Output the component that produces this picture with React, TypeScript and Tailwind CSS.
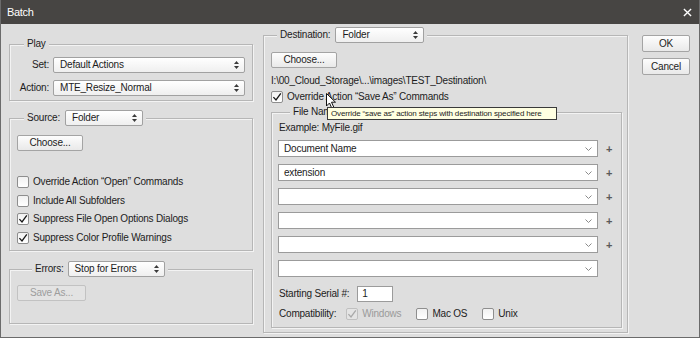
import type { ReactNode } from "react";

function UpDown() {
  return (
    <svg viewBox="0 0 5 8" className="h-[8px] w-[5px] shrink-0" fill="#3a3a3a">
      <path d="M2.5 0 5 3H0Z" />
      <path d="M0 5h5L2.5 8Z" />
    </svg>
  );
}

function Select({ children, className = "" }: { children: ReactNode; className?: string }) {
  return (
    <div
      className={`flex h-[16px] items-center justify-between rounded-[2px] border border-[#a1a1a1] bg-linear-to-b from-white to-[#efefef] pl-[6px] pr-[5px] ${className}`}
    >
      <span>{children}</span>
      <UpDown />
    </div>
  );
}

function Button({ children, className = "", disabled }: { children: ReactNode; className?: string; disabled?: boolean }) {
  return (
    <button
      disabled={disabled}
      className={`flex h-[16px] items-center justify-center rounded-[2px] border ${
        disabled
          ? "border-[#c2c2c2] bg-[#e3e3e3] text-[#9d9d9d]"
          : "border-[#a4a4a4] bg-linear-to-b from-[#fdfdfd] to-[#e9e9e9] text-[#1c1c1c]"
      } ${className}`}
    >
      {children}
    </button>
  );
}

function Box({ checked, disabled }: { checked?: boolean; disabled?: boolean }) {
  return (
    <span
      className={`flex h-[12px] w-[12px] shrink-0 items-center justify-center rounded-[2px] border ${
        disabled ? "border-[#c0c0c0] bg-[#e4e4e4]" : "border-[#8e8e8e] bg-linear-to-b from-[#f1f1f1] to-white"
      }`}
    >
      {checked && (
        <svg viewBox="0 0 10 10" className="h-[10px] w-[10px]">
          <path d="M1.4 5.1 4 7.9 8.8 1.4" fill="none" stroke={disabled ? "#a9a9a9" : "#161616"} strokeWidth="1.3" />
        </svg>
      )}
    </span>
  );
}

function Check({ label, checked, disabled }: { label: string; checked?: boolean; disabled?: boolean }) {
  return (
    <div className="flex h-[18.5px] items-center gap-[4px]">
      <Box checked={checked} disabled={disabled} />
      <span className={disabled ? "text-[#9a9a9a]" : ""}>{label}</span>
    </div>
  );
}

function Combo({ value = "", plus }: { value?: string; plus?: boolean }) {
  return (
    <div className="flex items-center">
      <div className="flex h-[17px] w-[320px] items-center justify-between border border-[#9b9b9b] bg-white pl-[5px] pr-[5px]">
        <span>{value}</span>
        <svg viewBox="0 0 7 4" className="h-[4px] w-[7px]">
          <path d="M.5.5 3.5 3.5 6.5.5" fill="none" stroke="#8a8a8a" />
        </svg>
      </div>
      {plus && <span className="ml-[8px] text-[11px] font-bold text-[#5a5a5a]">+</span>}
    </div>
  );
}

const group = "border border-[#b6b6b6] shadow-[inset_1px_1px_0_#f3f3f3,1px_1px_0_#f3f3f3]";

export default function App() {
  return (
    <div className="relative flex h-[338px] w-[700px] flex-col overflow-hidden border-x border-b border-[#6b6b6b] bg-[#dedede] font-['Liberation_Sans',Arial,sans-serif] text-[10px] leading-[14px] tracking-[-0.2px] text-[#1c1c1c]">
      {/* title bar */}
      <div className="flex h-[24px] shrink-0 items-center justify-between bg-[#474543] pl-[6px] pr-[7px] text-[11px] tracking-[-0.3px] text-white">
        <span>Batch</span>
        <svg viewBox="0 0 10 10" className="h-[9px] w-[9px]">
          <path d="M1 1 9 9M9 1 1 9" stroke="#fff" strokeWidth="1.5" />
        </svg>
      </div>

      <div className="flex items-start">
        {/* left column */}
        <div className="ml-[8px] flex w-[244px] flex-col">
          <fieldset className={`mt-[13px] pb-[4px] ${group}`}>
            <legend className="ml-[14px] bg-[#dedede] px-[3px]">Play</legend>
            <div className="mt-[6px] flex items-center">
              <span className="w-[39px] text-right">Set:</span>
              <Select className="ml-[4px] w-[192px]">Default Actions</Select>
            </div>
            <div className="mt-[7px] flex items-center">
              <span className="w-[39px] text-right">Action:</span>
              <Select className="ml-[4px] w-[192px]">MTE_Resize_Normal</Select>
            </div>
          </fieldset>

          <fieldset className={`mt-[9px] pb-[3px] ${group}`}>
            <legend className="ml-[14px] bg-[#dedede] px-[3px]">
              <div className="flex items-center gap-[5px]">
                <span>Source:</span>
                <Select className="w-[78px]">Folder</Select>
              </div>
            </legend>
            <div className="mt-[9px] pl-[7px]">
              <Button className="w-[66px]">Choose...</Button>
            </div>
            <div className="mt-[22px] flex flex-col pl-[7px]">
              <Check label={"Override Action \u201cOpen\u201d Commands"} />
              <Check label="Include All Subfolders" />
              <Check label="Suppress File Open Options Dialogs" checked />
              <Check label="Suppress Color Profile Warnings" checked />
            </div>
          </fieldset>

          <fieldset className={`mt-[10px] pb-[22px] ${group}`}>
            <legend className="ml-[22px] bg-[#dedede] px-[3px]">
              <div className="flex items-center gap-[4px]">
                <span>Errors:</span>
                <Select className="w-[97px]">Stop for Errors</Select>
              </div>
            </legend>
            <div className="mt-[8px] pl-[7px]">
              <Button className="w-[69px]" disabled>
                Save As...
              </Button>
            </div>
          </fieldset>
        </div>

        {/* destination */}
        <fieldset className={`ml-[10px] mt-[3px] w-[365px] pb-[4px] pl-[7px] pr-[5px] ${group}`}>
          <legend className="ml-[6px] bg-[#dedede] px-[3px]">
            <div className="flex items-center gap-[5px]">
              <span>Destination:</span>
              <Select className="w-[89px]">Folder</Select>
            </div>
          </legend>
          <div className="mt-[9px]">
            <Button className="w-[66px]">Choose...</Button>
          </div>
          <div className="mt-[6px]">I:\00_Cloud_Storage\...\images\TEST_Destination\</div>
          <div className="mt-[2px] flex h-[14px] items-center gap-[4px]">
            <Box checked />
            <span>Override Action &ldquo;Save As&rdquo; Commands</span>
          </div>

          <fieldset className={`mt-[1px] pb-[6px] pl-[6px] ${group}`}>
            <legend className="ml-[12px] bg-[#dedede] px-[3px]">File Naming</legend>
            <div className="mt-[2px] pl-[1px]">Example: MyFile.gif</div>
            <div className="mt-[5px] flex flex-col gap-[7px]">
              <Combo value="Document Name" plus />
              <Combo value="extension" plus />
              <Combo plus />
              <Combo plus />
              <Combo plus />
              <Combo />
            </div>
            <div className="mt-[9px] flex items-center pl-[1px]">
              <span>Starting Serial #:</span>
              <div className="ml-[8px] flex h-[16px] w-[36px] items-center border border-[#9b9b9b] bg-white pl-[4px]">1</div>
            </div>
            <div className="mt-[5px] flex h-[14px] items-center pl-[1px]">
              <span>Compatibility:</span>
              <div className="ml-[10px] flex items-center gap-[4px]">
                <Box checked disabled />
                <span className="text-[#9a9a9a]">Windows</span>
              </div>
              <div className="ml-[15px] flex items-center gap-[4px]">
                <Box />
                <span>Mac OS</span>
              </div>
              <div className="ml-[15px] flex items-center gap-[4px]">
                <Box />
                <span>Unix</span>
              </div>
            </div>
          </fieldset>
        </fieldset>

        {/* buttons */}
        <div className="ml-[14px] mt-[11px] flex flex-col gap-[6px]">
          <Button className="h-[17px] w-[48px]">OK</Button>
          <Button className="h-[17px] w-[48px]">Cancel</Button>
        </div>
      </div>

      {/* cursor + tooltip */}
      <svg viewBox="0 0 11 16" className="absolute left-[325px] top-[93px] h-[16px] w-[11px]">
        <path d="M.5.5v12.5l3-3 2.2 5 2-1-2.2-4.8H9.5Z" fill="#fff" stroke="#111" strokeWidth="1" />
      </svg>
      <div className="absolute left-[326px] top-[107px] flex h-[13px] w-[230px] items-center border border-[#3a3a3a] bg-[#ffffe1] px-[3px] text-[8px] leading-[11px] tracking-[-0.15px] text-[#1c1c1c]">
        Override &ldquo;save as&rdquo; action steps with destination specified here
      </div>
    </div>
  );
}
